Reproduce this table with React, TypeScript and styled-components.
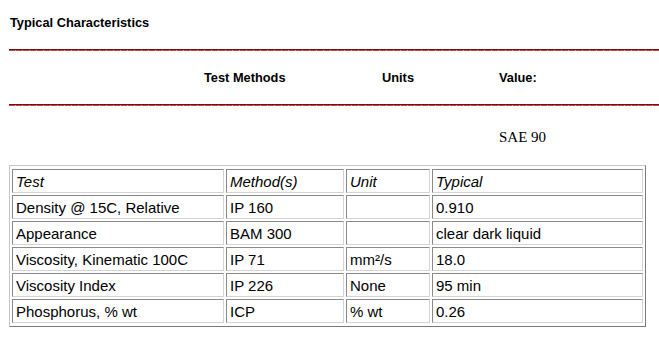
import React from "react";
import styled, { createGlobalStyle } from "styled-components";

interface Row {
  test: string;
  method: string;
  unit: React.ReactNode;
  typical: string;
}

const rows: Row[] = [
  { test: "Density @ 15C, Relative", method: "IP 160", unit: "", typical: "0.910" },
  { test: "Appearance", method: "BAM 300", unit: "", typical: "clear dark liquid" },
  { test: "Viscosity, Kinematic 100C", method: "IP 71", unit: "mm²/s", typical: "18.0" },
  { test: "Viscosity Index", method: "IP 226", unit: "None", typical: "95 min" },
  { test: "Phosphorus, % wt", method: "ICP", unit: "% wt", typical: "0.26" },
];

const GlobalStyle = createGlobalStyle`
  html, body {
    margin: 0;
    padding: 0;
    background: #fff;
    color: #000;
  }
`;

const Page = styled.div`
  padding: 15px 0 0 9px;
  width: 650px;
  font-family: "Liberation Sans", Arial, sans-serif;
`;

const Title = styled.div`
  padding-left: 1px;
  font-size: 12.8px;
  font-weight: bold;
  line-height: 16px;
`;

const Rule = styled.div<{ $top: number }>`
  margin-top: ${(p) => p.$top}px;
  height: 1px;
  border-top: 1px solid #7c0a0a;
  background: repeating-linear-gradient(
    to right,
    #b84a4a 0 6px,
    #d99a9a 6px 7px
  );
`;

const HeaderRow = styled.div`
  display: grid;
  grid-template-columns: 178px 117px auto;
  margin-top: 19px;
  padding-left: 195px;
  font-size: 12.8px;
  font-weight: bold;
  line-height: 16px;
`;

const Grade = styled.div`
  margin-top: 22px;
  padding-left: 490px;
  font-family: "Liberation Serif", "Times New Roman", serif;
  font-size: 15px;
  line-height: 18px;
`;

const Table = styled.table`
  margin-top: 19px;
  width: 637px;
  table-layout: fixed;
  border-collapse: separate;
  border-spacing: 2px;
  border: 1px solid;
  border-color: #c8c8c8 #7a7a7a #7a7a7a #c8c8c8;
  padding: 1px 0;
  font-size: 15px;
`;

const Cell = styled.td<{ $head?: boolean }>`
  padding: 3px 3px 1px;
  line-height: 18px;
  border: 1px solid;
  border-color: #8a8a8a #d4d4d4 #d4d4d4 #8a8a8a;
  font-style: ${(p) => (p.$head ? "italic" : "normal")};
  white-space: nowrap;
`;

export default function App() {
  return (
    <Page>
      <GlobalStyle />
      <Title>Typical Characteristics</Title>
      <Rule $top={18} />
      <HeaderRow>
        <span>Test Methods</span>
        <span>Units</span>
        <span>Value:</span>
      </HeaderRow>
      <Rule $top={18} />
      <Grade>SAE 90</Grade>
      <Table>
        <colgroup>
          <col style={{ width: 212 }} />
          <col style={{ width: 118 }} />
          <col style={{ width: 84 }} />
          <col />
        </colgroup>
        <tbody>
          <tr>
            <Cell $head>Test</Cell>
            <Cell $head>Method(s)</Cell>
            <Cell $head>Unit</Cell>
            <Cell $head>Typical</Cell>
          </tr>
          {rows.map((r) => (
            <tr key={r.test}>
              <Cell>{r.test}</Cell>
              <Cell>{r.method}</Cell>
              <Cell>{r.unit}</Cell>
              <Cell>{r.typical}</Cell>
            </tr>
          ))}
        </tbody>
      </Table>
    </Page>
  );
}
